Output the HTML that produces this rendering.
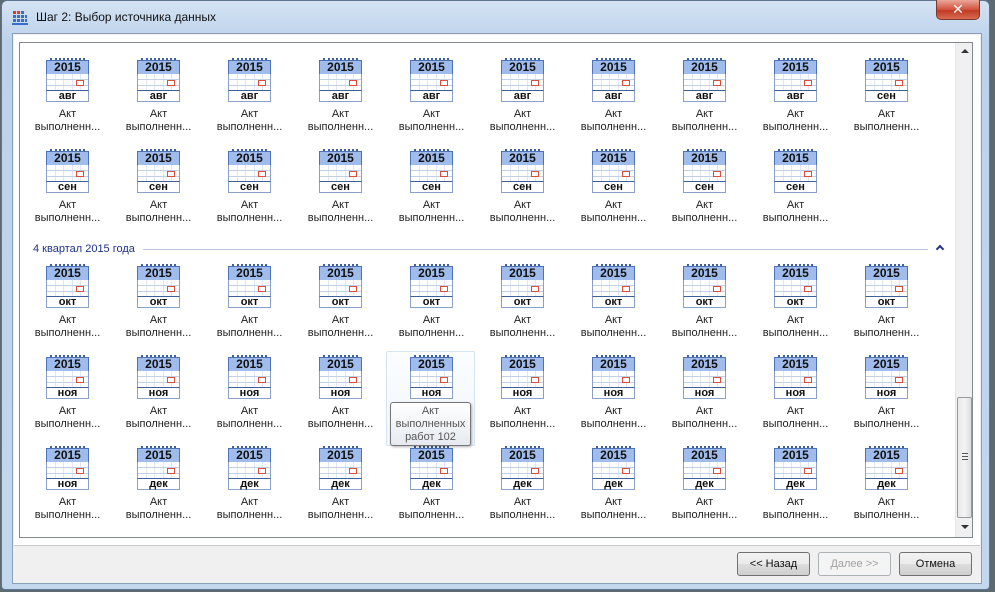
<!DOCTYPE html>
<html><head><meta charset="utf-8"><style>
*{margin:0;padding:0;box-sizing:border-box}
body{width:995px;height:592px;overflow:hidden;background:#5d6a72;font-family:"Liberation Sans","DejaVu Sans",sans-serif;position:relative}
.win{position:absolute;left:1px;top:0;width:989px;height:590px;background:linear-gradient(#d5e3f3,#bcd2ec 40px,#c3d7ee);border:1px solid #5e7590;border-radius:6px 6px 4px 4px}
.title{position:absolute;left:34px;top:9px;font-size:12px;color:#111}
.close{position:absolute;left:934px;top:-1px;width:44px;height:20px;border:1px solid #7a3a30;border-top:none;border-radius:0 0 5px 5px;background:linear-gradient(#e8a89a,#d2533e 50%,#c13a25 55%,#d96a50);color:#fff;font-weight:bold;font-size:14px;text-align:center;line-height:19px}
.client{position:absolute;left:10px;top:32px;width:970px;height:551px;background:#f0f0f0;border:1px solid #8aa0b8}
.white{position:absolute;left:1px;top:1px;width:966px;height:511px;background:#fff;border-bottom:1px solid #c9c9c9}
.list{position:absolute;left:19px;top:42px;width:954px;height:496px;border:1px solid #828790;background:#fff;overflow:hidden}
.sb{position:absolute;right:0;top:0;width:17px;height:494px;background:#f0f0f0;border-left:1px solid #e6e6e6}
.th{position:absolute;left:1px;top:354px;width:15px;height:121px;border:1px solid #9a9a9a;border-radius:2px;background:linear-gradient(90deg,#e8e8e8,#f4f4f4 50%,#dcdcdc)}
.ar{position:absolute;left:5px;width:0;height:0;border-left:4px solid transparent;border-right:4px solid transparent}
.it{position:absolute;width:91px;height:86px;text-align:center;font-size:11px;color:#222;line-height:13px}
.ic{position:absolute;left:24px;top:0;width:43px;height:44px}
.rg{position:absolute;left:4px;top:0;width:35px;height:3px;border-top:2px dotted #3d5f9a}
.hd{position:absolute;left:0;top:2px;width:43px;height:15px;background:#9fbcec;border:1px solid #4d72b8;font-weight:bold;font-size:12px;line-height:13px;color:#111}
.gr{position:absolute;left:0;top:16px;width:43px;height:17px;border-left:1px solid #8aa0c8;border-right:1px solid #8aa0c8;background:#fff;background-image:linear-gradient(90deg,transparent 8px,#c3cfe4 8px,#c3cfe4 9px,transparent 9px),linear-gradient(transparent 5px,#c3cfe4 5px,#c3cfe4 6px,transparent 6px,transparent 11px,#c3cfe4 11px,#c3cfe4 12px,transparent 12px);background-size:8.5px 17px,43px 17px}
.rd{position:absolute;left:30px;top:22px;width:8px;height:6px;border:1px solid #d8503c;background:#fff}
.mo{position:absolute;left:0;top:32px;width:43px;height:12px;background:#fff;border:1px solid #8aa0c8;border-top:1px solid #3d5f9a;font-weight:bold;font-size:11px;line-height:10px;color:#111}
.lb{position:absolute;left:0;top:50px;width:91px}
.grp{position:absolute;left:13px;top:200px;font-size:11px;color:#1e3287}
.gl{position:absolute;left:123px;top:206px;width:785px;height:1px;background:#b9c9dc}
.chev{position:absolute;left:917px;top:203px;width:6px;height:6px;border-left:2px solid #1e3287;border-top:2px solid #1e3287;transform:rotate(45deg)}
.hov{position:absolute;left:366px;top:308px;width:89px;height:95px;border:1px solid #d5e4f3;border-radius:2px;background:linear-gradient(#fbfdff,#f1f7fd)}
.tip{position:absolute;left:390px;top:402px;width:81px;height:44px;border:1px solid #767676;border-radius:3px;background:linear-gradient(#fff,#e6eaf0);font-size:11px;color:#555;text-align:center;line-height:13px;padding-top:2px;box-shadow:1px 1px 2px rgba(0,0,0,.3)}
.btn{position:absolute;top:552px;width:73px;height:24px;border:1px solid #707070;border-radius:3px;background:linear-gradient(#f2f2f2,#ebebeb 50%,#dddddd 51%,#cfcfcf);font-size:11px;text-align:center;line-height:22px;color:#111}
.dis{border-color:#adb2b5;background:#f4f4f4;color:#a0a0a0}
</style></head><body>
<div class="win">
<svg style="position:absolute;left:10px;top:8px" width="16" height="16"><g fill="#d04030"><rect x="1" y="2" width="3" height="3"/><rect x="5" y="2" width="3" height="3"/></g><g fill="#3a6fc8"><rect x="9" y="2" width="3" height="3"/><rect x="1" y="6" width="3" height="3"/><rect x="5" y="6" width="3" height="3"/><rect x="9" y="6" width="3" height="3"/><rect x="13" y="6" width="2" height="3"/><rect x="1" y="10" width="3" height="3"/><rect x="5" y="10" width="3" height="3"/><rect x="9" y="10" width="3" height="3"/><rect x="13" y="10" width="2" height="3"/></g><rect x="0" y="14" width="16" height="2" fill="#3a6fc8"/></svg>
<div class="title">Шаг 2: Выбор источника данных</div>
<div class="close">✕</div>
<div class="client"><div class="white"></div></div>
</div>
<div class="btn" style="left:737px">&lt;&lt; Назад</div>
<div class="btn dis" style="left:818px">Далее &gt;&gt;</div>
<div class="btn" style="left:899px">Отмена</div>
<div class="list">
<div class="sb"><div class="ar" style="top:6px;border-bottom:4px solid #333"></div><div class="th"><div style="position:absolute;left:4px;top:55px;width:6px;height:7px;border-top:1px solid #555;border-bottom:1px solid #555"><div style="margin-top:2px;height:1px;background:#555"></div></div></div><div class="ar" style="top:482px;border-top:4px solid #333"></div></div>
<div class="grp">4 квартал 2015 года</div><div class="gl"></div><div class="chev"></div>
<div class="hov"></div>

<!-- row 1 top 15 -->
<div class="it" style="left:2px;top:15px"><div class="ic"><div class="rg"></div><div class="hd">2015</div><div class="gr"></div><div class="rd"></div><div class="mo">авг</div></div><div class="lb">Акт<br>выполненн...</div></div>
<div class="it" style="left:93px;top:15px"><div class="ic"><div class="rg"></div><div class="hd">2015</div><div class="gr"></div><div class="rd"></div><div class="mo">авг</div></div><div class="lb">Акт<br>выполненн...</div></div>
<div class="it" style="left:184px;top:15px"><div class="ic"><div class="rg"></div><div class="hd">2015</div><div class="gr"></div><div class="rd"></div><div class="mo">авг</div></div><div class="lb">Акт<br>выполненн...</div></div>
<div class="it" style="left:275px;top:15px"><div class="ic"><div class="rg"></div><div class="hd">2015</div><div class="gr"></div><div class="rd"></div><div class="mo">авг</div></div><div class="lb">Акт<br>выполненн...</div></div>
<div class="it" style="left:366px;top:15px"><div class="ic"><div class="rg"></div><div class="hd">2015</div><div class="gr"></div><div class="rd"></div><div class="mo">авг</div></div><div class="lb">Акт<br>выполненн...</div></div>
<div class="it" style="left:457px;top:15px"><div class="ic"><div class="rg"></div><div class="hd">2015</div><div class="gr"></div><div class="rd"></div><div class="mo">авг</div></div><div class="lb">Акт<br>выполненн...</div></div>
<div class="it" style="left:548px;top:15px"><div class="ic"><div class="rg"></div><div class="hd">2015</div><div class="gr"></div><div class="rd"></div><div class="mo">авг</div></div><div class="lb">Акт<br>выполненн...</div></div>
<div class="it" style="left:639px;top:15px"><div class="ic"><div class="rg"></div><div class="hd">2015</div><div class="gr"></div><div class="rd"></div><div class="mo">авг</div></div><div class="lb">Акт<br>выполненн...</div></div>
<div class="it" style="left:730px;top:15px"><div class="ic"><div class="rg"></div><div class="hd">2015</div><div class="gr"></div><div class="rd"></div><div class="mo">авг</div></div><div class="lb">Акт<br>выполненн...</div></div>
<div class="it" style="left:821px;top:15px"><div class="ic"><div class="rg"></div><div class="hd">2015</div><div class="gr"></div><div class="rd"></div><div class="mo">сен</div></div><div class="lb">Акт<br>выполненн...</div></div>

<!-- row 2 top 106 -->
<div class="it" style="left:2px;top:106px"><div class="ic"><div class="rg"></div><div class="hd">2015</div><div class="gr"></div><div class="rd"></div><div class="mo">сен</div></div><div class="lb">Акт<br>выполненн...</div></div>
<div class="it" style="left:93px;top:106px"><div class="ic"><div class="rg"></div><div class="hd">2015</div><div class="gr"></div><div class="rd"></div><div class="mo">сен</div></div><div class="lb">Акт<br>выполненн...</div></div>
<div class="it" style="left:184px;top:106px"><div class="ic"><div class="rg"></div><div class="hd">2015</div><div class="gr"></div><div class="rd"></div><div class="mo">сен</div></div><div class="lb">Акт<br>выполненн...</div></div>
<div class="it" style="left:275px;top:106px"><div class="ic"><div class="rg"></div><div class="hd">2015</div><div class="gr"></div><div class="rd"></div><div class="mo">сен</div></div><div class="lb">Акт<br>выполненн...</div></div>
<div class="it" style="left:366px;top:106px"><div class="ic"><div class="rg"></div><div class="hd">2015</div><div class="gr"></div><div class="rd"></div><div class="mo">сен</div></div><div class="lb">Акт<br>выполненн...</div></div>
<div class="it" style="left:457px;top:106px"><div class="ic"><div class="rg"></div><div class="hd">2015</div><div class="gr"></div><div class="rd"></div><div class="mo">сен</div></div><div class="lb">Акт<br>выполненн...</div></div>
<div class="it" style="left:548px;top:106px"><div class="ic"><div class="rg"></div><div class="hd">2015</div><div class="gr"></div><div class="rd"></div><div class="mo">сен</div></div><div class="lb">Акт<br>выполненн...</div></div>
<div class="it" style="left:639px;top:106px"><div class="ic"><div class="rg"></div><div class="hd">2015</div><div class="gr"></div><div class="rd"></div><div class="mo">сен</div></div><div class="lb">Акт<br>выполненн...</div></div>
<div class="it" style="left:730px;top:106px"><div class="ic"><div class="rg"></div><div class="hd">2015</div><div class="gr"></div><div class="rd"></div><div class="mo">сен</div></div><div class="lb">Акт<br>выполненн...</div></div>

<!-- row 3 top 221 -->
<div class="it" style="left:2px;top:221px"><div class="ic"><div class="rg"></div><div class="hd">2015</div><div class="gr"></div><div class="rd"></div><div class="mo">окт</div></div><div class="lb">Акт<br>выполненн...</div></div>
<div class="it" style="left:93px;top:221px"><div class="ic"><div class="rg"></div><div class="hd">2015</div><div class="gr"></div><div class="rd"></div><div class="mo">окт</div></div><div class="lb">Акт<br>выполненн...</div></div>
<div class="it" style="left:184px;top:221px"><div class="ic"><div class="rg"></div><div class="hd">2015</div><div class="gr"></div><div class="rd"></div><div class="mo">окт</div></div><div class="lb">Акт<br>выполненн...</div></div>
<div class="it" style="left:275px;top:221px"><div class="ic"><div class="rg"></div><div class="hd">2015</div><div class="gr"></div><div class="rd"></div><div class="mo">окт</div></div><div class="lb">Акт<br>выполненн...</div></div>
<div class="it" style="left:366px;top:221px"><div class="ic"><div class="rg"></div><div class="hd">2015</div><div class="gr"></div><div class="rd"></div><div class="mo">окт</div></div><div class="lb">Акт<br>выполненн...</div></div>
<div class="it" style="left:457px;top:221px"><div class="ic"><div class="rg"></div><div class="hd">2015</div><div class="gr"></div><div class="rd"></div><div class="mo">окт</div></div><div class="lb">Акт<br>выполненн...</div></div>
<div class="it" style="left:548px;top:221px"><div class="ic"><div class="rg"></div><div class="hd">2015</div><div class="gr"></div><div class="rd"></div><div class="mo">окт</div></div><div class="lb">Акт<br>выполненн...</div></div>
<div class="it" style="left:639px;top:221px"><div class="ic"><div class="rg"></div><div class="hd">2015</div><div class="gr"></div><div class="rd"></div><div class="mo">окт</div></div><div class="lb">Акт<br>выполненн...</div></div>
<div class="it" style="left:730px;top:221px"><div class="ic"><div class="rg"></div><div class="hd">2015</div><div class="gr"></div><div class="rd"></div><div class="mo">окт</div></div><div class="lb">Акт<br>выполненн...</div></div>
<div class="it" style="left:821px;top:221px"><div class="ic"><div class="rg"></div><div class="hd">2015</div><div class="gr"></div><div class="rd"></div><div class="mo">окт</div></div><div class="lb">Акт<br>выполненн...</div></div>

<!-- row 4 top 312 -->
<div class="it" style="left:2px;top:312px"><div class="ic"><div class="rg"></div><div class="hd">2015</div><div class="gr"></div><div class="rd"></div><div class="mo">ноя</div></div><div class="lb">Акт<br>выполненн...</div></div>
<div class="it" style="left:93px;top:312px"><div class="ic"><div class="rg"></div><div class="hd">2015</div><div class="gr"></div><div class="rd"></div><div class="mo">ноя</div></div><div class="lb">Акт<br>выполненн...</div></div>
<div class="it" style="left:184px;top:312px"><div class="ic"><div class="rg"></div><div class="hd">2015</div><div class="gr"></div><div class="rd"></div><div class="mo">ноя</div></div><div class="lb">Акт<br>выполненн...</div></div>
<div class="it" style="left:275px;top:312px"><div class="ic"><div class="rg"></div><div class="hd">2015</div><div class="gr"></div><div class="rd"></div><div class="mo">ноя</div></div><div class="lb">Акт<br>выполненн...</div></div>
<div class="it" style="left:366px;top:312px"><div class="ic"><div class="rg"></div><div class="hd">2015</div><div class="gr"></div><div class="rd"></div><div class="mo">ноя</div></div></div>
<div class="it" style="left:457px;top:312px"><div class="ic"><div class="rg"></div><div class="hd">2015</div><div class="gr"></div><div class="rd"></div><div class="mo">ноя</div></div><div class="lb">Акт<br>выполненн...</div></div>
<div class="it" style="left:548px;top:312px"><div class="ic"><div class="rg"></div><div class="hd">2015</div><div class="gr"></div><div class="rd"></div><div class="mo">ноя</div></div><div class="lb">Акт<br>выполненн...</div></div>
<div class="it" style="left:639px;top:312px"><div class="ic"><div class="rg"></div><div class="hd">2015</div><div class="gr"></div><div class="rd"></div><div class="mo">ноя</div></div><div class="lb">Акт<br>выполненн...</div></div>
<div class="it" style="left:730px;top:312px"><div class="ic"><div class="rg"></div><div class="hd">2015</div><div class="gr"></div><div class="rd"></div><div class="mo">ноя</div></div><div class="lb">Акт<br>выполненн...</div></div>
<div class="it" style="left:821px;top:312px"><div class="ic"><div class="rg"></div><div class="hd">2015</div><div class="gr"></div><div class="rd"></div><div class="mo">ноя</div></div><div class="lb">Акт<br>выполненн...</div></div>

<!-- row 5 top 403 -->
<div class="it" style="left:2px;top:403px"><div class="ic"><div class="rg"></div><div class="hd">2015</div><div class="gr"></div><div class="rd"></div><div class="mo">ноя</div></div><div class="lb">Акт<br>выполненн...</div></div>
<div class="it" style="left:93px;top:403px"><div class="ic"><div class="rg"></div><div class="hd">2015</div><div class="gr"></div><div class="rd"></div><div class="mo">дек</div></div><div class="lb">Акт<br>выполненн...</div></div>
<div class="it" style="left:184px;top:403px"><div class="ic"><div class="rg"></div><div class="hd">2015</div><div class="gr"></div><div class="rd"></div><div class="mo">дек</div></div><div class="lb">Акт<br>выполненн...</div></div>
<div class="it" style="left:275px;top:403px"><div class="ic"><div class="rg"></div><div class="hd">2015</div><div class="gr"></div><div class="rd"></div><div class="mo">дек</div></div><div class="lb">Акт<br>выполненн...</div></div>
<div class="it" style="left:366px;top:403px"><div class="ic"><div class="rg"></div><div class="hd">2015</div><div class="gr"></div><div class="rd"></div><div class="mo">дек</div></div><div class="lb">Акт<br>выполненн...</div></div>
<div class="it" style="left:457px;top:403px"><div class="ic"><div class="rg"></div><div class="hd">2015</div><div class="gr"></div><div class="rd"></div><div class="mo">дек</div></div><div class="lb">Акт<br>выполненн...</div></div>
<div class="it" style="left:548px;top:403px"><div class="ic"><div class="rg"></div><div class="hd">2015</div><div class="gr"></div><div class="rd"></div><div class="mo">дек</div></div><div class="lb">Акт<br>выполненн...</div></div>
<div class="it" style="left:639px;top:403px"><div class="ic"><div class="rg"></div><div class="hd">2015</div><div class="gr"></div><div class="rd"></div><div class="mo">дек</div></div><div class="lb">Акт<br>выполненн...</div></div>
<div class="it" style="left:730px;top:403px"><div class="ic"><div class="rg"></div><div class="hd">2015</div><div class="gr"></div><div class="rd"></div><div class="mo">дек</div></div><div class="lb">Акт<br>выполненн...</div></div>
<div class="it" style="left:821px;top:403px"><div class="ic"><div class="rg"></div><div class="hd">2015</div><div class="gr"></div><div class="rd"></div><div class="mo">дек</div></div><div class="lb">Акт<br>выполненн...</div></div>
</div>
<div class="tip">Акт<br>выполненных<br>работ 102</div>
</body></html>
